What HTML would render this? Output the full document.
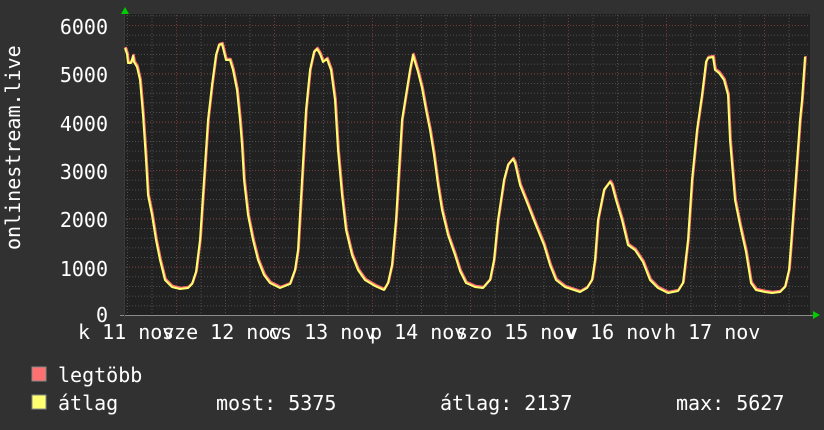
<!DOCTYPE html>
<html><head><meta charset="utf-8"><style>
html,body{margin:0;padding:0;background:#313131;}
body{width:824px;height:430px;position:relative;overflow:hidden;font-family:"DejaVu Sans Mono","Liberation Mono",monospace;color:#fff;}
.t{position:absolute;font-size:20px;line-height:20px;white-space:pre;}
.yl{position:absolute;font-size:20px;line-height:20px;right:716px;text-align:right;}
</style></head><body>
<svg width="824" height="430" style="position:absolute;left:0;top:0">
<defs>
<pattern id="ph" patternUnits="userSpaceOnUse" x="0" y="315" width="3" height="9.6667"><rect x="0" y="0" width="1" height="1" fill="#4e4e4e"/></pattern>
<pattern id="pv" patternUnits="userSpaceOnUse" x="176" y="0" width="24.5" height="3"><rect x="0" y="0" width="1" height="1" fill="#4e4e4e"/></pattern>
<pattern id="rh" patternUnits="userSpaceOnUse" x="0" y="315" width="3" height="48.333"><rect x="0" y="0" width="1" height="1" fill="#7a3a3a"/></pattern>
<pattern id="rv" patternUnits="userSpaceOnUse" x="176" y="0" width="98" height="3"><rect x="0" y="0" width="1" height="1" fill="#7a3a3a"/></pattern>
</defs>
<rect x="124" y="14" width="686" height="301" fill="#212121"/>
<rect x="125" y="14" width="685" height="301" fill="url(#ph)"/>
<rect x="125" y="14" width="685" height="301" fill="url(#pv)"/>
<rect x="125" y="14" width="685" height="301" fill="url(#rh)"/>
<rect x="125" y="14" width="685" height="301" fill="url(#rv)"/>
<line x1="120" y1="315.5" x2="814" y2="315.5" stroke="#8a8a8a"/>
<line x1="124.5" y1="10" x2="124.5" y2="319" stroke="#3a3a3a"/>
<polygon points="121,14 129,14 125,7" fill="#00cc00"/>
<polygon points="813,311 813,319 820,315" fill="#00cc00"/>
<g fill="none" stroke-linejoin="round">
<polyline stroke="#ff7070" stroke-width="2.5" transform="translate(0.6,-1)" points="125,48 127,54 128,63 131,63 133,56 134,62 137,67 140,80 143,115 146,160 148,195 152,215 156,240 160,260 165,280 172,287 180,289 188,288 192,284 196,272 200,240 204,180 208,120 212,85 216,55 219,45 222,44 224,52 226,60 230,60 233,70 237,90 240,120 242,145 244,180 248,215 253,240 258,260 264,275 270,283 280,288 290,284 295,270 298,250 302,180 306,110 310,70 314,52 317,49 320,54 323,62 327,59 331,70 335,100 338,150 342,195 346,230 352,255 358,270 365,280 375,286 384,290 388,283 392,265 396,220 399,170 402,120 406,95 410,70 413,55 415,62 418,72 422,88 426,110 430,130 434,155 438,185 442,210 448,235 455,255 460,271 466,283 475,287 483,288 490,280 494,260 498,220 504,180 508,165 513,159 515,163 520,185 528,205 535,223 544,245 550,265 556,280 565,287 580,292 587,288 592,280 595,260 598,220 604,190 610,182 612,185 616,200 622,220 628,245 635,250 643,262 650,280 658,288 668,293 678,291 683,283 688,240 692,180 697,130 702,95 706,62 708,58 713,57 715,70 719,73 724,80 728,95 730,140 735,200 740,225 746,252 751,283 756,290 765,292 772,293 780,292 785,287 789,270 791,245 795,190 800,120 802,100 805,57"/>
<polyline stroke="#ffff70" stroke-width="2" points="125,48 127,54 128,63 131,63 133,56 134,62 137,67 140,80 143,115 146,160 148,195 152,215 156,240 160,260 165,280 172,287 180,289 188,288 192,284 196,272 200,240 204,180 208,120 212,85 216,55 219,45 222,44 224,52 226,60 230,60 233,70 237,90 240,120 242,145 244,180 248,215 253,240 258,260 264,275 270,283 280,288 290,284 295,270 298,250 302,180 306,110 310,70 314,52 317,49 320,54 323,62 327,59 331,70 335,100 338,150 342,195 346,230 352,255 358,270 365,280 375,286 384,290 388,283 392,265 396,220 399,170 402,120 406,95 410,70 413,55 415,62 418,72 422,88 426,110 430,130 434,155 438,185 442,210 448,235 455,255 460,271 466,283 475,287 483,288 490,280 494,260 498,220 504,180 508,165 513,159 515,163 520,185 528,205 535,223 544,245 550,265 556,280 565,287 580,292 587,288 592,280 595,260 598,220 604,190 610,182 612,185 616,200 622,220 628,245 635,250 643,262 650,280 658,288 668,293 678,291 683,283 688,240 692,180 697,130 702,95 706,62 708,58 713,57 715,70 719,73 724,80 728,95 730,140 735,200 740,225 746,252 751,283 756,290 765,292 772,293 780,292 785,287 789,270 791,245 795,190 800,120 802,100 805,57"/>
</g>
<rect x="32" y="367" width="14" height="14" fill="#ff7070" stroke="#888" stroke-width="1"/>
<rect x="32" y="395" width="14" height="14" fill="#ffff70" stroke="#888" stroke-width="1"/>
</svg>
<div class="yl" style="top:17px">6000</div>
<div class="yl" style="top:65px">5000</div>
<div class="yl" style="top:114px">4000</div>
<div class="yl" style="top:162px">3000</div>
<div class="yl" style="top:210px">2000</div>
<div class="yl" style="top:259px">1000</div>
<div class="yl" style="top:305px">0</div>
<div class="t" style="left:-72px;top:155px;transform:rotate(-90deg);width:170px;text-align:center">onlinestream.live</div>
<div class="t" style="left:78px;top:322px">k 11 nov</div>
<div class="t" style="left:162px;top:322px">sze 12 nov</div>
<div class="t" style="left:268px;top:322px">cs 13 nov</div>
<div class="t" style="left:370px;top:322px">p 14 nov</div>
<div class="t" style="left:456px;top:322px">szo 15 nov</div>
<div class="t" style="left:566px;top:322px">v 16 nov</div>
<div class="t" style="left:664px;top:322px">h 17 nov</div>
<div class="t" style="left:58px;top:365px">legtöbb</div>
<div class="t" style="left:58px;top:393px">átlag</div>
<div class="t" style="left:216px;top:393px">most: 5375</div>
<div class="t" style="left:440px;top:393px">átlag: 2137</div>
<div class="t" style="left:676px;top:393px">max: 5627</div>
</body></html>
